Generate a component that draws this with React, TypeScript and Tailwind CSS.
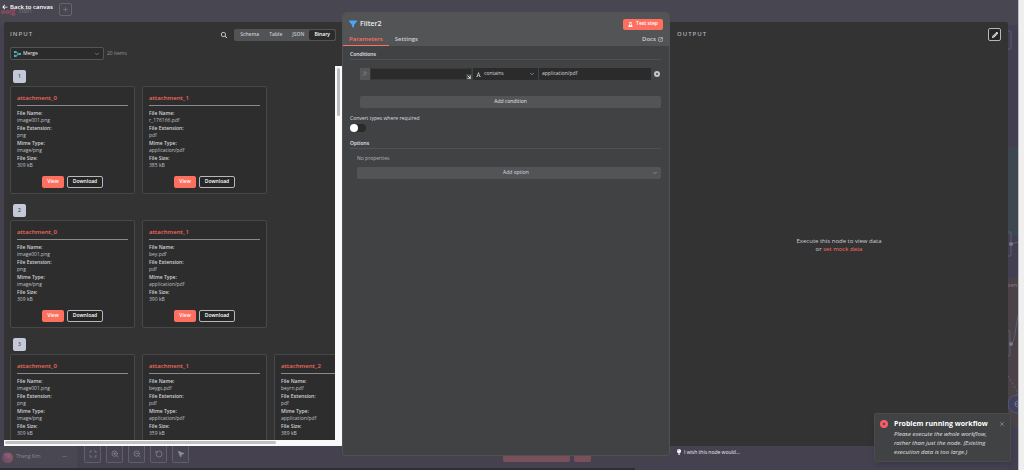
import React from "react";
import {
  FaArrowLeft,
  FaFilter,
  FaFlask,
  FaFont,
  FaLightbulb,
  FaPencil,
  FaMagnifyingGlass,
  FaCircleXmark,
} from "react-icons/fa6";
import {
  ArrowDownRight,
  ChevronDown,
  Maximize,
  MousePointer2,
  Plus,
  RotateCcw,
  SquareArrowOutUpRight,
  X,
  ZoomIn,
  ZoomOut,
} from "lucide-react";

type Attachment = { key: string; name: string; ext: string; mime: string; size: string };

const image: Attachment = { key: "attachment_0", name: "image001.png", ext: "png", mime: "image/png", size: "309 kB" };
const pdf = (key: string, name: string, size: string): Attachment => ({
  key,
  name,
  ext: "pdf",
  mime: "application/pdf",
  size,
});

const items: Attachment[][] = [
  [image, pdf("attachment_1", "r_176166.pdf", "385 kB")],
  [image, pdf("attachment_1", "bey.pdf", "390 kB")],
  [image, pdf("attachment_1", "beygs.pdf", "359 kB"), pdf("attachment_2", "beyrn.pdf", "389 kB")],
];

const canvasTools = [
  { label: "Fit view", Icon: Maximize },
  { label: "Zoom in", Icon: ZoomIn },
  { label: "Zoom out", Icon: ZoomOut },
  { label: "Reset zoom", Icon: RotateCcw },
];

function Field({ label, value }: { label: string; value: string }) {
  return (
    <div>
      <dt className="leading-[8px] font-semibold text-[#d2d3d8]">{label}</dt>
      <dd className="leading-[7px] text-[#bfc1c9]">{value}</dd>
    </div>
  );
}

function AttachmentCard({ file }: { file: Attachment }) {
  return (
    <article className="w-[125px] shrink-0 rounded-xs border border-[#484848] bg-[#2d2d2d] px-[6px] pt-[7px] pb-[5px]">
      <h3 className="border-b border-[#8a8a8a] pb-[3px] text-[6px] leading-[8px] font-semibold text-[#f0695c]">
        {file.key}
      </h3>
      <dl className="mt-[3px] text-[5px]">
        <Field label="File Name:" value={file.name} />
        <Field label="File Extension:" value={file.ext} />
        <Field label="Mime Type:" value={file.mime} />
        <Field label="File Size:" value={file.size} />
      </dl>
      <div className="mt-[7px] flex justify-center gap-[3px] text-[5px] font-semibold text-white">
        <button type="button" className="h-3 w-[22px] rounded-xs bg-[#ff6f60]">
          View
        </button>
        <button type="button" className="h-3 w-9 rounded-xs border border-[#b8b8bc] bg-[#262626]">
          Download
        </button>
      </div>
    </article>
  );
}

function MergeIcon() {
  return (
    <svg viewBox="0 0 14 12" className="h-[6px] w-[7px]" fill="none" stroke="#4fb9c4" strokeWidth="1.8">
      <rect x="1" y="1" width="3" height="2.4" />
      <rect x="1" y="8.6" width="3" height="2.4" />
      <path d="M4 2.2h1.6L8 6l-2.4 3.8H4M8 6h2" />
      <rect x="10" y="4.8" width="3" height="2.4" />
    </svg>
  );
}

function InputPanel() {
  return (
    <section className="my-[10px] flex min-w-0 flex-col overflow-hidden rounded-tl-xs bg-[#333333]">
      <header className="flex h-[25px] items-center px-[6px]">
        <h2 className="text-[6px] font-semibold tracking-[1px] text-[#b2b2b6]">INPUT</h2>
        <button type="button" aria-label="Search" className="mr-[7px] ml-auto text-[#dddddd]">
          <FaMagnifyingGlass className="size-[6px]" />
        </button>
        <div className="flex h-3 rounded-xs bg-[#525355] p-px text-[5px] font-semibold text-[#c8c9ce]">
          <button type="button" className="px-[5px]">
            Schema
          </button>
          <button type="button" className="px-[5px]">
            Table
          </button>
          <button type="button" className="px-[5px]">
            JSON
          </button>
          <button type="button" className="rounded-xs bg-[#2b2b2b] px-[5px] text-white">
            Binary
          </button>
        </div>
      </header>
      <div className="flex h-[19px] items-start px-[6px]">
        <div className="relative flex h-[13px] w-[94px] items-center rounded-xs border border-[#555555] bg-[#2b2b2b] pl-[3px]">
          <MergeIcon />
          <select
            aria-label="Input node"
            className="h-full min-w-0 flex-1 appearance-none bg-transparent pl-[2px] text-[5px] text-[#ececf0]"
          >
            <option>Merge</option>
          </select>
          <ChevronDown className="pointer-events-none absolute right-[3px] size-[6px] text-[#b8b8bc]" />
        </div>
        <span className="ml-[3px] text-[5px] leading-[13px] text-[#94969c]">20 items</span>
      </div>
      <div className="flex min-h-0 flex-1">
        <div className="flex min-w-0 flex-1 flex-col">
          <ol className="flex min-h-0 flex-1 flex-col gap-[10px] overflow-hidden pt-1 pl-[6px]">
            {items.map((files, i) => (
              <li key={i} className="flex flex-col gap-[3px]">
                <span className="ml-[3px] flex h-[13px] w-[13px] items-center justify-center rounded-xs bg-[#c3c9d9] text-[5px] font-semibold text-[#44464f]">
                  {i + 1}
                </span>
                <div className="flex gap-[7px]">
                  {files.map((f) => (
                    <AttachmentCard key={f.key} file={f} />
                  ))}
                </div>
              </li>
            ))}
          </ol>
          <div className="h-[6px] bg-[#fafafa] py-px pl-px">
            <div className="h-[3px] w-[82%] rounded-full bg-[#c1c1c1]" />
          </div>
        </div>
        <div className="w-[7px] bg-[#fafafa] px-[2px] pt-[2px]">
          <div className="h-12 w-[3px] rounded-full bg-[#bdbdbd]" />
        </div>
      </div>
    </section>
  );
}

function SectionTitle({ children }: { children: React.ReactNode }) {
  return (
    <h3 className="border-b border-[#505153] pb-px text-[5px] leading-[8px] font-semibold text-[#e4e4e8]">
      {children}
    </h3>
  );
}

function FilterPanel() {
  return (
    <section className="flex flex-col overflow-hidden rounded-sm border border-[#515254] bg-[#414244]">
      <header className="bg-[#525456]">
        <div className="flex h-[22px] items-center px-[6px]">
          <FaFilter className="size-2 text-[#4da6f5]" />
          <h1 className="ml-[3px] text-[7px] font-semibold text-[#ececee]">Filter2</h1>
          <button
            type="button"
            className="ml-auto flex h-[11px] w-10 items-center justify-center gap-[3px] rounded-xs bg-[#ff6f60] text-[5px] font-semibold text-white"
          >
            <FaFlask className="size-[5px]" />
            Test step
          </button>
        </div>
        <nav className="flex h-[11px] items-stretch text-[6px] leading-[8px] font-semibold text-[#cfd0d4]">
          <a href="#parameters" className="border-b border-[#ff6f60] px-[6px] text-[#ff6f60]">
            Parameters
          </a>
          <a href="#settings" className="px-[6px]">
            Settings
          </a>
          <a href="#docs" className="mr-[6px] ml-auto flex items-start gap-[2px]">
            Docs
            <SquareArrowOutUpRight className="mt-[2px] size-[5px]" strokeWidth={3} />
          </a>
        </nav>
      </header>
      <div className="pt-1 pr-2 pl-[7px]">
        <SectionTitle>Conditions</SectionTitle>
        <div className="mt-2 flex h-3 items-stretch pl-[10px] text-[5px] text-[#d8d9dd]">
          <span className="flex w-[10px] items-center justify-center bg-[#555658] font-serif italic text-[#85868a]">
            fx
          </span>
          <div className="relative flex w-[102px]">
            <input aria-label="Value 1" className="min-w-0 flex-1 border border-[#383838] bg-[#2b2b2b]" />
            <ArrowDownRight
              className="absolute right-0 bottom-0 size-[6px] bg-[#414244] text-white"
              strokeWidth={3}
            />
          </div>
          <div className="relative ml-px flex w-[65px] items-center bg-[#2b2b2b] pl-[3px]">
            <FaFont className="size-[5px]" />
            <select
              aria-label="Operator"
              className="h-full min-w-0 flex-1 appearance-none bg-transparent pl-[3px] text-[5px]"
            >
              <option>contains</option>
            </select>
            <ChevronDown className="pointer-events-none absolute right-[3px] size-[6px]" />
          </div>
          <input
            aria-label="Value 2"
            defaultValue="application/pdf"
            className="ml-px min-w-0 flex-1 bg-[#2b2b2b] px-[3px]"
          />
          <button type="button" aria-label="Remove condition" className="ml-[3px] pr-px text-[#c4c5ca]">
            <FaCircleXmark className="size-[6px]" />
          </button>
        </div>
        <div className="mt-4 flex pl-[10px]">
          <button type="button" className="h-3 flex-1 rounded-xs bg-[#525456] text-[5px] text-[#e8e8ec]">
            Add condition
          </button>
        </div>
        <label htmlFor="convert" className="mt-[6px] block text-[5px] leading-[8px] text-[#dedee2]">
          Convert types where required
        </label>
        <input
          id="convert"
          type="checkbox"
          role="switch"
          className="mt-[2px] block h-2 w-4 appearance-none rounded-full bg-[#2b2b2b] before:block before:size-2 before:rounded-full before:bg-white"
        />
        <div className="mt-[7px]">
          <SectionTitle>Options</SectionTitle>
        </div>
        <div className="pl-[7px]">
          <p className="mt-[5px] text-[5px] leading-[8px] text-[#b4b5ba]">No properties</p>
          <div className="relative mt-[5px] flex h-3 items-center">
            <select
              aria-label="Add option"
              className="h-full w-full appearance-none rounded-xs bg-[#525456] pl-[14px] text-center text-[5px] text-[#dedee2] [text-align-last:center]"
            >
              <option>Add option</option>
            </select>
            <ChevronDown className="pointer-events-none absolute right-[3px] size-[6px] text-[#b8b8bc]" />
          </div>
        </div>
      </div>
    </section>
  );
}

function OutputPanel() {
  return (
    <div className="-mb-[14px] flex min-w-0 flex-col pt-[10px]">
      <section className="flex flex-1 flex-col rounded-tr-xs bg-[#333333]">
        <header className="flex h-[25px] items-center px-[7px]">
          <h2 className="text-[6px] font-semibold tracking-[1px] text-[#b2b2b6]">OUTPUT</h2>
          <button
            type="button"
            aria-label="Edit output"
            className="ml-auto flex size-[13px] items-center justify-center rounded-xs border border-[#b8b8bc] bg-[#262626] text-white"
          >
            <FaPencil className="size-[6px]" />
          </button>
        </header>
        <div className="flex flex-1 flex-col items-center justify-center pb-[3px] text-center text-[6px] leading-[8px] text-[#cfd0d5]">
          <p>Execute this node to view data</p>
          <p>
            or{" "}
            <a href="#mock" className="text-[#ff6f60]">
              set mock data
            </a>
          </p>
        </div>
      </section>
      <footer className="flex h-6 items-start pt-[2px] pl-[6px]">
        <button type="button" className="flex items-center gap-[2px] text-[5px] leading-[8px] text-[#ececf0]">
          <FaLightbulb className="size-[6px] text-white" />
          I wish this node would...
        </button>
      </footer>
    </div>
  );
}

function Backdrop() {
  return (
    <div className="absolute inset-0 flex bg-[#45414f]">
      <div className="flex min-w-0 flex-1 flex-col">
        <div className="flex h-[25px] items-start bg-[#474651] pt-[3px]">
          <div className="flex w-[59px] items-start pt-[3px] pl-px text-[7px] leading-[10px] text-[#77757f]">
            <svg viewBox="0 0 30 16" className="mt-[2px] h-2 w-[15px]" fill="none" stroke="#8b4a5c" strokeWidth="3">
              <circle cx="4" cy="8" r="2.5" />
              <circle cx="13" cy="8" r="2.5" />
              <circle cx="25" cy="4" r="2.5" />
              <circle cx="25" cy="12" r="2.5" />
              <path d="M6.5 8h4M15.500 8c4 0 3-4 7-4M15.500 8c4 0 3 4 7 4" />
            </svg>
            <span className="ml-[3px]">n8n</span>
          </div>
          <button
            type="button"
            aria-label="New"
            className="flex size-[13px] items-center justify-center rounded-xs border border-[#66656f] text-[#85848e]"
          >
            <Plus className="size-[7px]" />
          </button>
        </div>
        <div className="flex-1" />
        <div className="flex h-[22px] items-start">
          <div className="flex h-full w-[77px] items-center gap-[3px] bg-[#484752] pl-[2px] text-[5px] text-[#8a8893]">
            <span className="flex size-[11px] items-center justify-center rounded-full bg-linear-to-r from-[#6c4a6b] to-[#8a5560]">
              TK
            </span>
            Thang Kim
            <span className="ml-auto pr-[10px]">—</span>
          </div>
          <div className="ml-[7px] flex gap-[5px] text-[#8f8d97]">
            {canvasTools.map(({ label, Icon }) => (
              <button
                key={label}
                type="button"
                aria-label={label}
                className="flex h-[17px] w-[17px] items-center justify-center rounded-b-xs border border-t-0 border-[#625f6b] bg-[#484552]"
              >
                <Icon className="size-2" />
              </button>
            ))}
            <button
              type="button"
              aria-label="Tidy up"
              className="flex h-[17px] w-[17px] items-center justify-center rounded-b-xs border border-t-0 border-[#625f6b] bg-[#484552]"
            >
              <MousePointer2 className="size-2 fill-current" />
            </button>
          </div>
          <div className="ml-auto flex w-[505px] gap-1">
            <div className="h-4 w-[67px] rounded-b-xs bg-[#79505a]" />
            <div className="h-4 w-[17px] rounded-b-xs bg-[#79505a]" />
          </div>
        </div>
        <div className="h-[2px] w-[63%] bg-[#2e2d33]" />
      </div>
      <svg viewBox="0 0 10 470" preserveAspectRatio="none" className="h-full w-[10px]">
        <rect width="10" height="470" fill="#413f50" />
        <rect width="10" height="25" fill="#474651" />
        <rect y="147" width="10" height="89" fill="#3d474f" />
        <rect y="278" width="10" height="150" fill="#4b4248" />
        <g fill="none" stroke="#5d5f75">
          <path d="M0 31h2q1 0 1 1v16q0 1-1 1H0M0 232h2q1 0 1 1v22q0 1-1 1H0M0 331h1q1 0 1 1v23q0 1-1 1H0" />
          <path d="M3 344c4-2 4-14 7-28M4 244l6-2" />
          <path d="M0 376l9 15v6" strokeDasharray="2 2" />
        </g>
        <circle cx="3" cy="244" r="2" fill="#77788e" />
        <circle cx="3" cy="344" r="2" fill="#77788e" />
        <circle cx="9" cy="404" r="9" fill="#42415a" stroke="#56587a" />
        <path d="M10 401a3 3 0 0 0 0 6M7 404h3" fill="none" stroke="#6c70a8" />
        <text x="0" y="287" fontSize="6" fill="#85808a">
          ten
        </text>
      </svg>
      <div className="w-[6px] border-l border-[#bdbdbd] bg-[#efefef]" />
    </div>
  );
}

function Toast() {
  return (
    <aside
      role="alert"
      className="absolute right-[13px] bottom-2 flex w-[137px] items-start rounded-xs border border-[#4a4b4d] bg-[#414244] px-[5px] pt-[5px] pb-[4px] shadow-md"
    >
      <FaCircleXmark className="mt-px size-2 shrink-0 text-[#fb5d68]" />
      <div className="ml-[6px] flex-1">
        <h2 className="text-[7px] leading-[10px] font-bold text-white">Problem running workflow</h2>
        <p className="mt-px text-[6px] leading-[9px] whitespace-nowrap text-[#e0e0e4] italic">
          Please execute the whole workflow,
          <br />
          rather than just the node. (Existing
          <br />
          execution data is too large.)
        </p>
      </div>
      <button type="button" aria-label="Close" className="mt-[2px] text-[#b8b8bc]">
        <X className="size-[6px]" />
      </button>
    </aside>
  );
}

export default function App() {
  return (
    <div className="relative h-screen overflow-hidden font-['Open_Sans',sans-serif]">
      <Backdrop />
      <main className="relative grid h-full grid-cols-[minmax(0,1fr)_328px_minmax(0,1fr)] pt-3 pr-4 pb-[14px] pl-1">
        <InputPanel />
        <FilterPanel />
        <OutputPanel />
      </main>
      <a
        href="#canvas"
        className="absolute top-[2px] left-[2px] flex items-center gap-[2px] text-[6px] leading-[10px] font-semibold text-white"
      >
        <FaArrowLeft className="size-[6px]" />
        Back to canvas
      </a>
      <Toast />
    </div>
  );
}
